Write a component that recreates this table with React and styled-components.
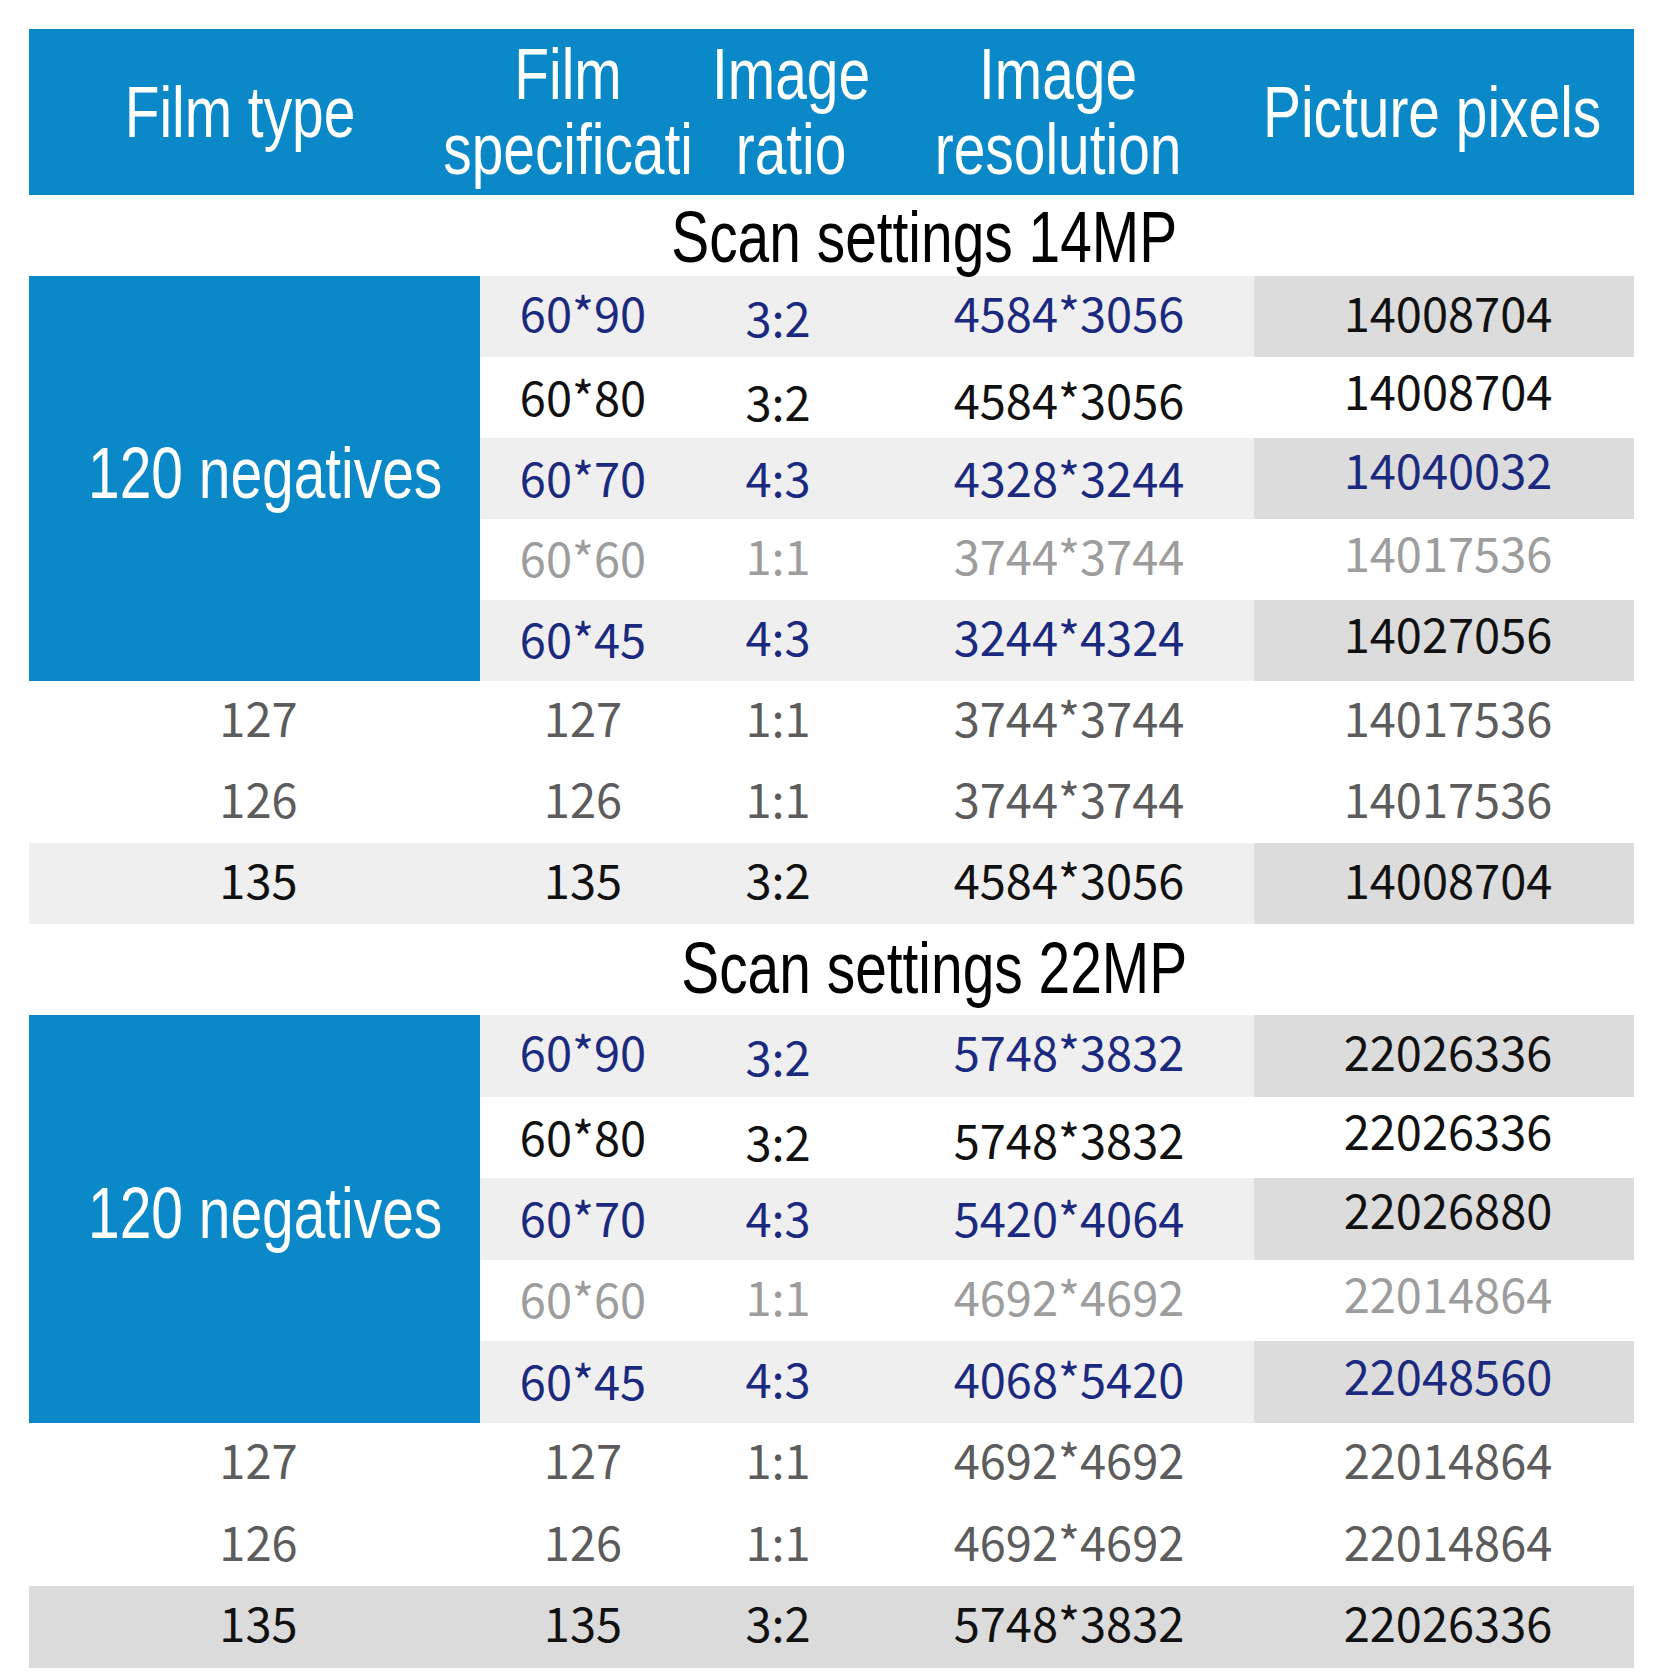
import styled, { createGlobalStyle } from 'styled-components';

const BLUE = '#0a88c7';
const INK = {
  navy: '#1b2a7e',
  black: '#111111',
  light: '#9d9d9d',
  dim: '#5c5c5c',
};
const STRIPE = {
  white: ['#ffffff', '#ffffff'],
  gray: ['#efefef', '#dcdcdc'],
  dark: ['#dbdbdb', '#dbdbdb'],
};
// extra left padding per column, to sit values where the reference has them
const NUDGE = [8, 6, 0, 8, 8];

const sections = [
  {
    title: 'Scan settings 14MP',
    shift: 185,
    band: 81,
    top: 2,
    rowH: 81,
    group: [
      { cells: ['60*90', '3:2', '4584*3056', '14008704'], ink: ['navy', 'navy', 'navy', 'black'], stripe: 'gray', dy: [0, 5, 0, 0] },
      { cells: ['60*80', '3:2', '4584*3056', '14008704'], ink: ['black', 'black', 'black', 'black'], stripe: 'white', dy: [3, 8, 6, -3] },
      { cells: ['60*70', '4:3', '4328*3244', '14040032'], ink: ['navy', 'navy', 'navy', 'navy'], stripe: 'gray', dy: [3, 3, 3, -5] },
      { cells: ['60*60', '1:1', '3744*3744', '14017536'], ink: ['light', 'light', 'light', 'light'], stripe: 'white', dy: [2, 0, 0, -3] },
      { cells: ['60*45', '4:3', '3244*4324', '14027056'], ink: ['navy', 'navy', 'navy', 'black'], stripe: 'gray', dy: [2, 0, 0, -3] },
    ],
    rest: [
      { cells: ['127', '127', '1:1', '3744*3744', '14017536'], ink: 'dim', stripe: 'white' },
      { cells: ['126', '126', '1:1', '3744*3744', '14017536'], ink: 'dim', stripe: 'white' },
      { cells: ['135', '135', '3:2', '4584*3056', '14008704'], ink: 'black', stripe: 'gray' },
    ],
  },
  {
    title: 'Scan settings 22MP',
    shift: 205,
    band: 91,
    top: 4,
    rowH: 81.6,
    group: [
      { cells: ['60*90', '3:2', '5748*3832', '22026336'], ink: ['navy', 'navy', 'navy', 'black'], stripe: 'gray', dy: [0, 5, 0, 0] },
      { cells: ['60*80', '3:2', '5748*3832', '22026336'], ink: ['black', 'black', 'black', 'black'], stripe: 'white', dy: [3, 8, 6, -3] },
      { cells: ['60*70', '4:3', '5420*4064', '22026880'], ink: ['navy', 'navy', 'navy', 'black'], stripe: 'gray', dy: [3, 3, 3, -5] },
      { cells: ['60*60', '1:1', '4692*4692', '22014864'], ink: ['light', 'light', 'light', 'light'], stripe: 'white', dy: [2, 0, 0, -3] },
      { cells: ['60*45', '4:3', '4068*5420', '22048560'], ink: ['navy', 'navy', 'navy', 'navy'], stripe: 'gray', dy: [2, 0, 0, -3] },
    ],
    rest: [
      { cells: ['127', '127', '1:1', '4692*4692', '22014864'], ink: 'dim', stripe: 'white' },
      { cells: ['126', '126', '1:1', '4692*4692', '22014864'], ink: 'dim', stripe: 'white' },
      { cells: ['135', '135', '3:2', '5748*3832', '22026336'], ink: 'black', stripe: 'dark' },
    ],
  },
];

// base lift so Noto's tall line box sits like the reference glyphs
const LIFT = -5;

export default function App() {
  return (
    <Page>
      <GlobalStyle />
      <Table>
        <Head>
          <HeadCell>
            <Narrow>Film type</Narrow>
          </HeadCell>
          <HeadCell>
            <Narrow>Film</Narrow>
            <Narrow>specificati</Narrow>
          </HeadCell>
          <HeadCell>
            <Narrow>Image</Narrow>
            <Narrow>ratio</Narrow>
          </HeadCell>
          <HeadCell>
            <Narrow>Image</Narrow>
            <Narrow>resolution</Narrow>
          </HeadCell>
          <HeadCell $nudge={11}>
            <Narrow>Picture pixels</Narrow>
          </HeadCell>
        </Head>

        {sections.map((s) => (
          <div key={s.title}>
            <Title $shift={s.shift} $band={s.band} $top={s.top}>
              <Narrow>{s.title}</Narrow>
            </Title>

            <Grid $rowH={s.rowH}>
              <Negatives>
                <Narrow>120 negatives</Narrow>
              </Negatives>

              {s.group.map((r, i) =>
                r.cells.map((c, j) => (
                  <Cell
                    key={`g${i}-${j}`}
                    $bg={STRIPE[r.stripe][j === 3 ? 1 : 0]}
                    $color={INK[r.ink[j]]}
                    $nudge={NUDGE[j + 1]}
                  >
                    <Value $dy={r.dy[j] + LIFT}>{c}</Value>
                  </Cell>
                ))
              )}

              {s.rest.map((r, i) =>
                r.cells.map((c, j) => (
                  <Cell
                    key={`r${i}-${j}`}
                    $bg={STRIPE[r.stripe][j === 4 ? 1 : 0]}
                    $color={INK[r.ink]}
                    $nudge={NUDGE[j]}
                  >
                    <Value $dy={LIFT}>{c}</Value>
                  </Cell>
                ))
              )}
            </Grid>
          </div>
        ))}
      </Table>
    </Page>
  );
}

const GlobalStyle = createGlobalStyle`
  html, body {
    margin: 0;
    background: #ffffff;
  }
`;

const Page = styled.div`
  padding: 29px 0 12px 29px;
`;

const Table = styled.div`
  width: 1605px;
  font-family: "Liberation Sans", Arial, sans-serif;
`;

const Narrow = styled.span`
  display: block;
  white-space: nowrap;
  transform: scaleX(0.79);
`;

const Head = styled.div`
  display: grid;
  grid-template-columns: 422px 234px 212px 322px 415px;
  height: 166px;
  background: ${BLUE};
  color: #ffffff;
  font-size: 72px;
  line-height: 75px;
`;

const HeadCell = styled.div`
  display: flex;
  flex-direction: column;
  align-items: center;
  justify-content: center;
  padding-left: ${(p) => p.$nudge || 0}px;
  min-width: 0;
`;

const Title = styled.div`
  display: flex;
  justify-content: center;
  height: ${(p) => p.$band}px;
  box-sizing: border-box;
  padding-top: ${(p) => p.$top}px;
  padding-left: ${(p) => p.$shift}px;
  font-size: 72px;
  line-height: 81px;
  color: #000000;
`;

const Grid = styled.div`
  display: grid;
  grid-template-columns: 451px 200px 196px 378px 380px;
  grid-auto-rows: ${(p) => p.$rowH}px;
`;

const Negatives = styled.div`
  grid-column: 1;
  grid-row: 1 / span 5;
  display: flex;
  align-items: center;
  justify-content: center;
  padding-left: 22px;
  padding-bottom: 12px;
  background: ${BLUE};
  color: #ffffff;
  font-size: 72px;
  line-height: 1;
`;

const Cell = styled.div`
  display: flex;
  align-items: center;
  justify-content: center;
  padding-left: ${(p) => p.$nudge || 0}px;
  background: ${(p) => p.$bg};
  color: ${(p) => p.$color};
  font-family: "Noto Sans CJK SC", "Noto Sans", sans-serif;
  font-size: 47px;
  font-weight: 400;
  line-height: 1;
`;

const Value = styled.span`
  display: block;
  white-space: nowrap;
  transform: translateY(${(p) => p.$dy || 0}px);
`;
